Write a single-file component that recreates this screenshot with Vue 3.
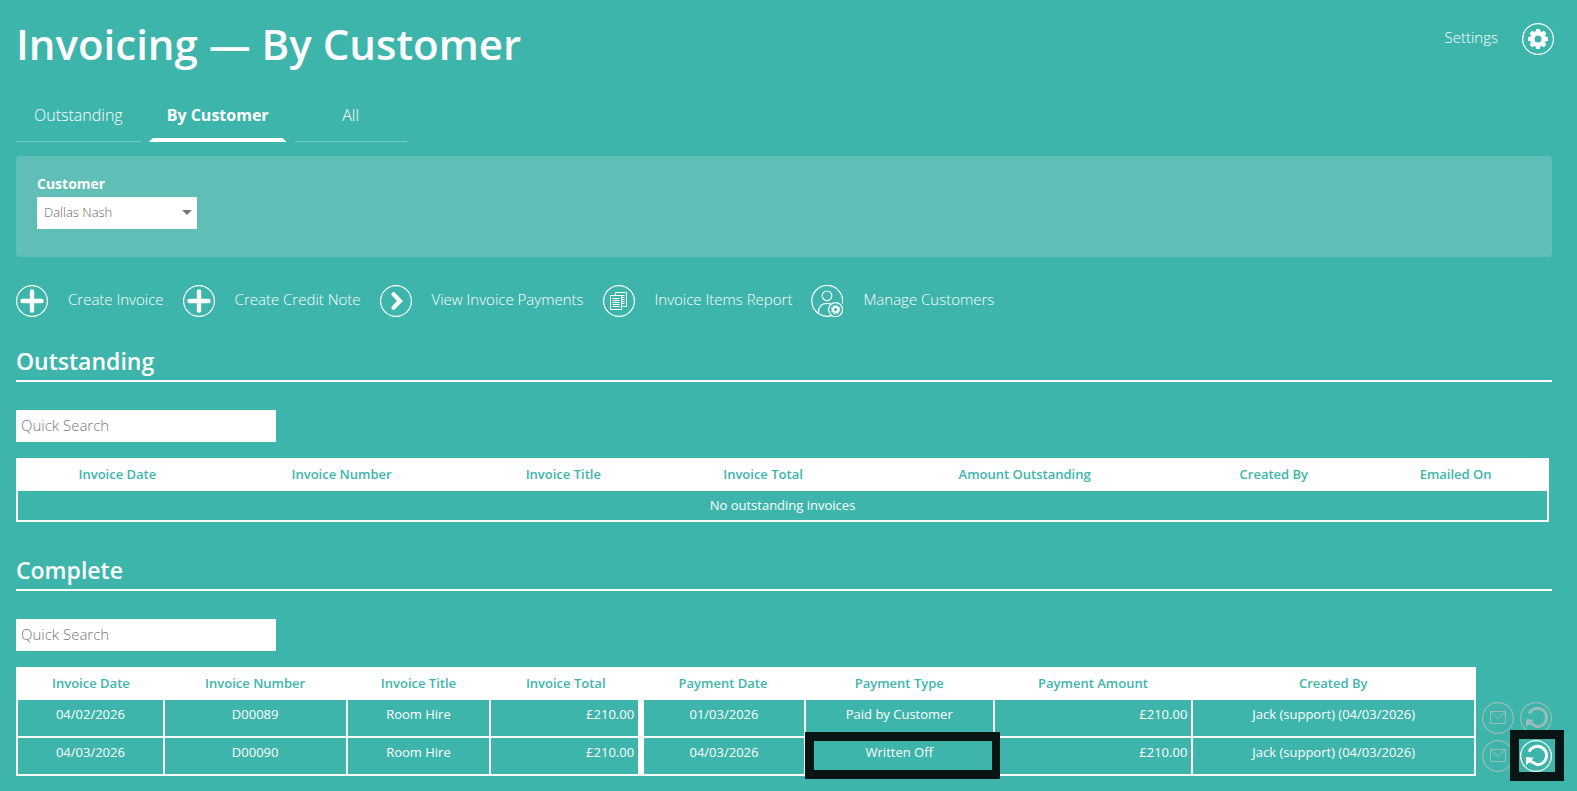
<script setup>
import { ref } from 'vue'

const tabs = [
  { label: 'Outstanding', active: false },
  { label: 'By Customer', active: true },
  { label: 'All', active: false },
]

const actions = [
  { label: 'Create Invoice', icon: 'plus' },
  { label: 'Create Credit Note', icon: 'plus' },
  { label: 'View Invoice Payments', icon: 'chevron' },
  { label: 'Invoice Items Report', icon: 'report' },
  { label: 'Manage Customers', icon: 'customers' },
]

const outstandingColumns = [
  { label: 'Invoice Date', width: 200 },
  { label: 'Invoice Number', width: 250 },
  { label: 'Invoice Title', width: 194 },
  { label: 'Invoice Total', width: 206 },
  { label: 'Amount Outstanding', width: 318 },
  { label: 'Created By', width: 181 },
  { label: 'Emailed On', width: 184 },
]

const completeColumns = [
  { label: 'Invoice Date', width: 147 },
  { label: 'Invoice Number', width: 183 },
  { label: 'Invoice Title', width: 144 },
  { label: 'Invoice Total', width: 151 },
  { label: 'Payment Date', width: 164 },
  { label: 'Payment Type', width: 189 },
  { label: 'Payment Amount', width: 199 },
  { label: 'Created By', width: 283 },
]

const completeRows = [
  { date: '04/02/2026', number: 'D00089', title: 'Room Hire', total: '£210.00', paid: '01/03/2026', type: 'Paid by Customer', amount: '£210.00', by: 'Jack (support) (04/03/2026)', marked: false },
  { date: '04/03/2026', number: 'D00090', title: 'Room Hire', total: '£210.00', paid: '04/03/2026', type: 'Written Off', amount: '£210.00', by: 'Jack (support) (04/03/2026)', marked: true },
]

const share = (columns, column) => {
  const sum = columns.reduce((total, c) => total + c.width, 0)
  return { width: (column.width / sum) * 100 + '%' }
}

const customer = ref('Dallas Nash')
const outstandingSearch = ref('')
const completeSearch = ref('')

const gearTeeth = [0, 45, 90, 135, 180, 225, 270, 315]
</script>

<template>
  <main class="page">
    <header class="top">
      <h1>Invoicing — By Customer</h1>
      <a class="settings" href="#">
        <span>Settings</span>
        <svg class="icon" viewBox="0 0 32 32" aria-hidden="true">
          <circle class="ring" cx="16" cy="16" r="15.4" />
          <circle cx="16" cy="16" r="5.7" fill="none" stroke="#fff" stroke-width="4.4" />
          <path v-for="a in gearTeeth" :key="a" d="M13.4 9 14.3 6h3.400l.9 3z" fill="#fff" :transform="`rotate(${a} 16 16)`" />
        </svg>
      </a>
    </header>

    <nav class="tabs">
      <a v-for="tab in tabs" :key="tab.label" href="#" class="tab" :class="{ active: tab.active }">{{ tab.label }}</a>
    </nav>

    <section class="filter">
      <label for="customer">Customer</label>
      <div class="picker">
        <select id="customer" v-model="customer">
          <option>Dallas Nash</option>
        </select>
        <svg class="caret" viewBox="0 0 10 5" aria-hidden="true"><path d="M0 0h10L5 5z" fill="#777" /></svg>
      </div>
    </section>

    <div class="actions">
      <button v-for="action in actions" :key="action.label" type="button" class="action">
        <svg v-if="action.icon === 'plus'" class="icon" viewBox="0 0 32 32" aria-hidden="true">
          <circle class="ring" cx="16" cy="16" r="15.4" />
          <path d="M16 6.5v19M6.5 16h19" stroke="#fff" stroke-width="4.4" stroke-linecap="round" />
        </svg>
        <svg v-else-if="action.icon === 'chevron'" class="icon" viewBox="0 0 32 32" aria-hidden="true">
          <circle class="ring" cx="16" cy="16" r="15.4" />
          <path d="M13.5 9.300 20 16l-6.500 6.700" fill="none" stroke="#fff" stroke-width="4.200" stroke-linecap="round" />
        </svg>
        <svg v-else-if="action.icon === 'report'" class="icon" viewBox="0 0 32 32" aria-hidden="true">
          <circle class="ring" cx="16" cy="16" r="15.4" />
          <path d="M12.500 10.500v-3h11v14h-5" fill="none" stroke="#fff" />
          <path d="M7.500 10.500h11v14h-11z" fill="none" stroke="#fff" />
          <path d="M9.500 13.500h7M9.500 15.500h7M9.500 17.500h7M9.500 19.500h7M9.500 21.500h7M18.500 10.500h3M19 12.500h2.500M19 14.500h2.500M19 16.500h2.500M19 18.500h2.500" stroke="#fff" />
        </svg>
        <svg v-else class="icon" viewBox="0 0 32 32" aria-hidden="true">
          <path class="ring" d="M31.400 18.500A15.400 15.400 0 1 0 20.500 30.700" />
          <circle class="ring" cx="16" cy="10.800" r="4.800" />
          <path class="ring" d="M7.200 28.500C7.200 22 10.500 18.300 16 18.300c1.800 0 3.200.4 4.500 1.100" />
          <circle class="ring" cx="24.600" cy="24.600" r="7" />
          <circle cx="24.600" cy="24.600" r="2.600" fill="none" stroke="#fff" stroke-width="1.900" />
          <circle cx="24.600" cy="24.600" r="4" fill="none" stroke="#fff" stroke-width="1.200" stroke-dasharray="1.640 1.500" />
        </svg>
        <span>{{ action.label }}</span>
      </button>
    </div>

    <section class="block">
      <h2>Outstanding</h2>
      <input v-model="outstandingSearch" class="search" type="text" placeholder="Quick Search" aria-label="Search outstanding invoices" />
      <table class="grid empty">
        <colgroup>
          <col v-for="c in outstandingColumns" :key="c.label" :style="share(outstandingColumns, c)" />
        </colgroup>
        <thead>
          <tr><th v-for="c in outstandingColumns" :key="c.label" scope="col">{{ c.label }}</th></tr>
        </thead>
        <tbody>
          <tr><td :colspan="outstandingColumns.length">No outstanding invoices</td></tr>
        </tbody>
      </table>
    </section>

    <section class="block">
      <h2>Complete</h2>
      <input v-model="completeSearch" class="search" type="text" placeholder="Quick Search" aria-label="Search complete invoices" />
      <div class="complete">
        <table class="grid">
          <colgroup>
            <col v-for="c in completeColumns" :key="c.label" :style="share(completeColumns, c)" />
          </colgroup>
          <thead>
            <tr><th v-for="c in completeColumns" :key="c.label" scope="col">{{ c.label }}</th></tr>
          </thead>
          <tbody>
            <tr v-for="row in completeRows" :key="row.number">
              <td>{{ row.date }}</td>
              <td>{{ row.number }}</td>
              <td>{{ row.title }}</td>
              <td class="money divider">{{ row.total }}</td>
              <td>{{ row.paid }}</td>
              <td :class="{ marked: row.marked }">{{ row.type }}</td>
              <td class="money">{{ row.amount }}</td>
              <td>{{ row.by }}</td>
            </tr>
          </tbody>
        </table>
        <div class="row-tools">
          <div v-for="row in completeRows" :key="row.number" class="tools">
            <button type="button" class="tool faded" :aria-label="`Email ${row.number}`">
              <svg class="icon" viewBox="0 0 32 32" aria-hidden="true">
                <circle class="ring" cx="16" cy="16" r="15.400" />
                <path d="M8.500 9.500h15v12h-15zM8.500 9.500l7.500 7 7.500-7" fill="none" stroke="currentColor" />
              </svg>
            </button>
            <button type="button" class="tool" :class="row.marked ? 'boxed' : 'faded'" :aria-label="`Undo ${row.number}`">
              <svg class="icon" viewBox="0 0 32 32" aria-hidden="true">
                <circle class="ring" cx="16" cy="16" r="15.400" />
                <path d="M9 11.600A9.200 9.200 0 1 1 16.500 24.600" fill="none" stroke="currentColor" stroke-width="3" />
                <path d="M6 17 14 17.800 11.500 20 17 23v3.200L9.300 22.300 6 25.300z" fill="currentColor" />
              </svg>
            </button>
          </div>
        </div>
      </div>
    </section>
  </main>
</template>

<style>
html,
body {
  background: #3db5ab;
}
</style>

<style scoped>
.page {
  box-sizing: border-box;
  padding: 15px 25px 15px 16px;
  font-family: 'Open Sans', 'Noto Sans', sans-serif;
  font-size: 14px;
  font-weight: 300;
  color: #fff;
}

.page *,
.page *::before,
.page *::after {
  box-sizing: border-box;
}

a {
  color: inherit;
  text-decoration: none;
}

button {
  padding: 0;
  border: 0;
  background: none;
  color: inherit;
  font: inherit;
  cursor: pointer;
}

.icon {
  display: block;
  flex: none;
  width: 32px;
  height: 32px;
}

.ring {
  fill: none;
  stroke: currentColor;
  stroke-width: 1.2;
}

.top {
  display: flex;
  justify-content: space-between;
  align-items: flex-start;
}

h1 {
  margin: 0;
  font-size: 42px;
  line-height: 58px;
  font-weight: 600;
}

.settings {
  display: flex;
  gap: 24px;
  margin: 8px -2px 0 0;
  font-size: 15px;
  line-height: 28px;
}

.tabs {
  display: flex;
  gap: 8px;
  margin-top: 25px;
}

.tab {
  min-width: 112px;
  height: 44px;
  padding: 0 18px;
  border-bottom: 1px solid #78ccc4;
  font-size: 16px;
  line-height: 34px;
  text-align: center;
}

.tab.active {
  position: relative;
  border-bottom: 0;
  font-weight: 700;
}

.tab.active::after {
  content: '';
  position: absolute;
  right: 0;
  bottom: 0;
  left: 0;
  height: 4px;
  background: #fff;
  clip-path: polygon(4px 0, calc(100% - 4px) 0, 100% 100%, 0 100%);
}

.filter {
  height: 101px;
  margin-top: 14px;
  padding: 18px 21px;
  border-radius: 4px;
  background: #5fbfb6;
}

.filter label {
  display: block;
  font-size: 14px;
  line-height: 20px;
  font-weight: 700;
}

.picker {
  position: relative;
  width: 160px;
  margin-top: 3px;
}

.picker select {
  display: block;
  width: 100%;
  height: 32px;
  padding: 0 24px 2px 7px;
  border: 0;
  border-radius: 0;
  appearance: none;
  background: #fff;
  color: #666;
  font: inherit;
  font-size: 13px;
}

.caret {
  position: absolute;
  top: 13px;
  right: 5px;
  width: 10px;
  height: 5px;
  pointer-events: none;
}

.actions {
  display: flex;
  flex-wrap: wrap;
  gap: 19px;
  margin-top: 28px;
}

.action {
  display: flex;
  gap: 20px;
  font-size: 15px;
  line-height: 28px;
}

.block {
  margin-top: 28px;
}

.block + .block {
  margin-top: 32px;
}

h2 {
  margin: 0;
  padding-bottom: 2px;
  border-bottom: 2px solid #fff;
  font-size: 23px;
  line-height: 33px;
  font-weight: 600;
}

.search {
  display: block;
  width: 260px;
  height: 32px;
  margin: 28px 0 16px;
  padding: 0 5px 2px;
  border: 0;
  border-radius: 0;
  background: #fff;
  color: #666;
  font: inherit;
  font-size: 15px;
}

.search::placeholder {
  color: #777;
  opacity: 1;
}

.grid {
  width: 100%;
  table-layout: fixed;
  border-collapse: collapse;
  border: 2px solid #fff;
  font-size: 13px;
  line-height: 18px;
}

.grid.empty {
  width: calc(100% - 3px);
}

.grid th {
  height: 31px;
  padding: 0 0 2px;
  background: #fff;
  color: #3db5ab;
  font-weight: 600;
}

.grid td {
  height: 38px;
  padding: 5px 4px;
  border: 2px solid #fff;
  font-weight: 400;
  text-align: center;
  vertical-align: top;
}

.grid.empty td {
  height: 31px;
}

.grid td.money {
  text-align: right;
}

.grid td.divider {
  border-right-width: 6px;
}

.marked {
  position: relative;
}

.marked::after {
  content: '';
  position: absolute;
  inset: -6px -7px -5px -1px;
  border: 9px solid #071514;
  border-right-width: 8px;
}

.complete {
  display: flex;
  gap: 6px;
}

.complete .grid {
  flex: 1;
  width: auto;
}

.row-tools {
  display: flex;
  flex-direction: column;
  gap: 6px;
  padding-top: 35px;
}

.tools {
  display: flex;
  gap: 6px;
}

.tool.faded {
  color: #9cbcb8;
}

.tool.boxed {
  position: relative;
}

.tool.boxed::after {
  content: '';
  position: absolute;
  inset: -10px -12px -9px -10px;
  border: 9px solid #071514;
}
</style>
